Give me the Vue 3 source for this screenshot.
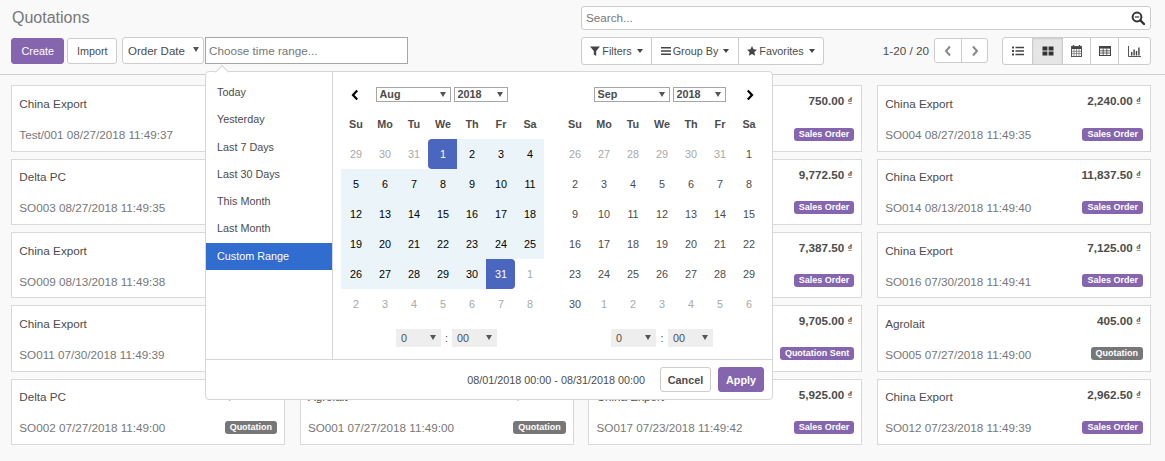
<template>
  <div class="page">
    <header class="panel">
      <h1 class="title">Quotations</h1>
      <div class="search">
        <span class="search-text">Search...</span>
        <svg class="search-icon" viewBox="0 0 14 14" width="14" height="14">
          <circle cx="6" cy="6" r="4.4" fill="none" stroke="#333" stroke-width="2" />
          <path d="M9.4 9.4 L13 13" stroke="#333" stroke-width="2.4" stroke-linecap="round" />
          <path d="M3.8 6 H8.2" stroke="#333" stroke-width="1.2" />
        </svg>
      </div>

      <div class="actions">
        <button class="btn primary">Create</button>
        <button class="btn">Import</button>
        <div class="select-wrap order-date">
          <select class="order-select"><option>Order Date</option></select>
        </div>
        <input class="range-input" placeholder="Choose time range..." />
      </div>

      <div class="tools">
        <div class="group filters">
          <button class="tool filter-btn">
            <svg viewBox="0 0 10 10" width="10" height="10"><path d="M0 .5 H10 L6.2 5 V10 L3.8 8.4 V5 Z" fill="#444" /></svg>
            Filters<i class="caret"></i>
          </button>
          <button class="tool group-btn">
            <svg viewBox="0 0 10 10" width="10" height="10"><path d="M0 1 H10 V2.6 H0 Z M0 4.2 H10 V5.8 H0 Z M0 7.4 H10 V9 H0 Z" fill="#444" /></svg>
            Group By<i class="caret"></i>
          </button>
          <button class="tool fav-btn">
            <svg viewBox="0 0 10 10" width="10" height="10"><path d="M5 0 L6.5 3.3 L10 3.7 L7.4 6.1 L8.1 9.7 L5 7.9 L1.9 9.7 L2.6 6.1 L0 3.7 L3.5 3.3 Z" fill="#444" /></svg>
            Favorites<i class="caret"></i>
          </button>
        </div>

        <div class="pager">
          <span class="pager-text">1-20 / 20</span>
          <div class="group pager-btns">
            <button class="tool">
              <svg viewBox="0 0 8 12" width="8" height="12"><path d="M6 1.5 L2 6 L6 10.5" fill="none" stroke="#888" stroke-width="2" /></svg>
            </button>
            <button class="tool">
              <svg viewBox="0 0 8 12" width="8" height="12"><path d="M2 1.5 L6 6 L2 10.5" fill="none" stroke="#888" stroke-width="2" /></svg>
            </button>
          </div>
        </div>

        <div class="group views">
          <button class="tool view">
            <svg viewBox="0 0 12 10" width="12" height="10"><path d="M0 .5 H2 V2.5 H0 Z M3.5 .8 H12 V2.2 H3.5 Z M0 4 H2 V6 H0 Z M3.5 4.3 H12 V5.7 H3.5 Z M0 7.5 H2 V9.5 H0 Z M3.5 7.8 H12 V9.2 H3.5 Z" fill="#444" /></svg>
          </button>
          <button class="tool view active">
            <svg viewBox="0 0 12 10" width="12" height="10"><path d="M.5 .5 H5.4 V4.4 H.5 Z M6.6 .5 H11.5 V4.4 H6.6 Z M.5 5.6 H5.4 V9.5 H.5 Z M6.6 5.6 H11.5 V9.5 H6.6 Z" fill="#333" /></svg>
          </button>
          <button class="tool view">
            <svg viewBox="0 0 11 12" width="11" height="12">
              <path d="M2.5 0 V2 M8.5 0 V2" stroke="#444" stroke-width="1.4" />
              <rect x=".5" y="1.5" width="10" height="10" fill="none" stroke="#555" />
              <rect x="1" y="2" width="9" height="2" fill="#444" />
              <path d="M3 4 V11 M5.5 4 V11 M8 4 V11 M1 6.3 H10 M1 8.6 H10" stroke="#777" stroke-width=".8" />
            </svg>
          </button>
          <button class="tool view">
            <svg viewBox="0 0 12 10" width="12" height="10">
              <rect x=".5" y=".5" width="11" height="9" fill="none" stroke="#444" />
              <rect x="1" y="1" width="10" height="1.6" fill="#444" />
              <path d="M4.2 2.6 V9 M7.8 2.6 V9 M1 4.8 H11 M1 7 H11" stroke="#444" stroke-width=".8" />
            </svg>
          </button>
          <button class="tool view">
            <svg viewBox="0 0 13 11" width="13" height="11">
              <path d="M.5 0 V10.5 H13" fill="none" stroke="#555" />
              <path d="M3 6 H4.4 V9.5 H3 Z M5.4 3.5 H6.8 V9.5 H5.4 Z M7.8 5 H9.2 V9.5 H7.8 Z M10.2 1.5 H11.6 V9.5 H10.2 Z" fill="#444" />
            </svg>
          </button>
        </div>
      </div>
    </header>

    <main class="board">
      <article v-for="(card, i) in cards" :key="i" class="card">
        <div class="card-top">
          <span class="card-name">{{ card.name }}</span>
          <strong v-if="card.amount" class="card-amount">{{ card.amount }} <span class="currency">₫</span></strong>
        </div>
        <div class="card-bottom">
          <span class="card-ref">{{ card.ref }}</span>
          <span v-if="card.state" class="badge" :class="{ grey: card.state === 'Quotation' }">{{ card.state }}</span>
        </div>
      </article>
    </main>

    <section class="picker">
      <span class="picker-arrow"></span>
      <div class="picker-main">
        <ul class="ranges">
          <li v-for="r in ranges" :key="r" :class="{ current: r === 'Custom Range' }">{{ r }}</li>
        </ul>
        <div class="calendars">
          <div v-for="cal in calendars" :key="cal.month" class="calendar" :class="cal.side">
            <div class="cal-head">
              <span class="chev">
                <svg v-if="cal.side === 'left'" viewBox="0 0 8 12" width="8" height="12"><path d="M6.2 1.5 L2 6 L6.2 10.5" fill="none" stroke="#000" stroke-width="2.2" /></svg>
              </span>
              <div class="cal-selects">
                <div class="select-wrap" :style="{ width: cal.monthWidth + 'px' }">
                  <select class="cal-select"><option>{{ cal.month }}</option></select>
                </div>
                <div class="select-wrap" :style="{ width: cal.yearWidth + 'px' }">
                  <select class="cal-select"><option>2018</option></select>
                </div>
              </div>
              <span class="chev">
                <svg v-if="cal.side === 'right'" viewBox="0 0 8 12" width="8" height="12"><path d="M1.8 1.5 L6 6 L1.8 10.5" fill="none" stroke="#000" stroke-width="2.2" /></svg>
              </span>
            </div>
            <div class="cal-grid">
              <span v-for="d in weekdays" :key="d" class="dow">{{ d }}</span>
              <span v-for="(day, n) in cal.days" :key="n" class="day" :class="day.cls">{{ day.label }}</span>
            </div>
            <div class="time-row">
              <div class="select-wrap time"><select class="time-select"><option>0</option></select></div>
              <span class="colon">:</span>
              <div class="select-wrap time"><select class="time-select"><option>00</option></select></div>
            </div>
          </div>
        </div>
      </div>
      <footer class="picker-foot">
        <span class="picked">08/01/2018 00:00 - 08/31/2018 00:00</span>
        <button class="foot-btn">Cancel</button>
        <button class="foot-btn apply">Apply</button>
      </footer>
    </section>
  </div>
</template>

<script setup>
const ranges = ['Today', 'Yesterday', 'Last 7 Days', 'Last 30 Days', 'This Month', 'Last Month', 'Custom Range']
const weekdays = ['Su', 'Mo', 'Tu', 'We', 'Th', 'Fr', 'Sa']

function blank() {
  return { name: '', ref: '', amount: '', state: '' }
}

const cards = [
  { name: 'China Export', ref: 'Test/001 08/27/2018 11:49:37', amount: '', state: '' },
  blank(),
  { name: '', ref: '', amount: '750.00', state: 'Sales Order' },
  { name: 'China Export', ref: 'SO004 08/27/2018 11:49:35', amount: '2,240.00', state: 'Sales Order' },
  { name: 'Delta PC', ref: 'SO003 08/27/2018 11:49:35', amount: '', state: '' },
  blank(),
  { name: '', ref: '', amount: '9,772.50', state: 'Sales Order' },
  { name: 'China Export', ref: 'SO014 08/13/2018 11:49:40', amount: '11,837.50', state: 'Sales Order' },
  { name: 'China Export', ref: 'SO009 08/13/2018 11:49:38', amount: '', state: '' },
  blank(),
  { name: '', ref: '', amount: '7,387.50', state: 'Sales Order' },
  { name: 'China Export', ref: 'SO016 07/30/2018 11:49:41', amount: '7,125.00', state: 'Sales Order' },
  { name: 'China Export', ref: 'SO011 07/30/2018 11:49:39', amount: '', state: '' },
  blank(),
  { name: '', ref: '', amount: '9,705.00', state: 'Quotation Sent' },
  { name: 'Agrolait', ref: 'SO005 07/27/2018 11:49:00', amount: '405.00', state: 'Quotation' },
  { name: 'Delta PC', ref: 'SO002 07/27/2018 11:49:00', amount: '1,799.00', state: 'Quotation' },
  { name: 'Agrolait', ref: 'SO001 07/27/2018 11:49:00', amount: '1,799.00', state: 'Quotation' },
  { name: 'China Export', ref: 'SO017 07/23/2018 11:49:42', amount: '5,925.00', state: 'Sales Order' },
  { name: 'China Export', ref: 'SO012 07/23/2018 11:49:39', amount: '2,962.50', state: 'Sales Order' },
]

// 42 cells starting from the Sunday before the 1st
function buildDays(prevLast, prevCount, monthLen, inRange) {
  const days = []
  for (let i = prevCount - 1; i >= 0; i--) days.push({ label: prevLast - i, cls: 'off' })
  for (let d = 1; d <= monthLen; d++) {
    let cls = ''
    if (inRange) {
      cls = d === 1 ? 'start' : d === monthLen ? 'end' : 'in-range'
    }
    days.push({ label: d, cls })
  }
  let next = 1
  while (days.length < 42) days.push({ label: next++, cls: 'off' })
  return days
}

const calendars = [
  { side: 'left', month: 'Aug', monthWidth: 75, yearWidth: 54, days: buildDays(31, 3, 31, true) },
  { side: 'right', month: 'Sep', monthWidth: 76, yearWidth: 53, days: buildDays(31, 6, 30, false) },
]
</script>

<style scoped>
.page {
  position: relative;
  height: 461px;
  overflow: hidden;
  background: #f9f9f9;
  font-family: "Liberation Sans", Arial, sans-serif;
  font-size: 11.7px;
  color: #4c4c4c;
}

/* control panel */
.panel {
  display: grid;
  grid-template-columns: 570px 1fr;
  grid-template-rows: 24px 27px;
  row-gap: 7px;
  box-sizing: border-box;
  height: 75px;
  padding: 6px 14px 10px 11px;
  border-bottom: 1px solid #cfcfcf;
}

.title {
  margin: 0 0 0 1px;
  font-size: 16px;
  font-weight: 400;
  line-height: 24px;
  color: #777;
}

.search {
  display: flex;
  align-items: center;
  justify-content: space-between;
  padding: 0 5px 0 4px;
  background: #fff;
  border: 1px solid #ccc;
  border-radius: 3px;
}

.search-text {
  margin-bottom: 2px;
  color: #777;
}

.actions {
  display: flex;
  align-items: center;
}

.btn {
  height: 26px;
  margin-top: 1px;
  margin-right: 3px;
  padding: 0 8.5px;
  background: #fff;
  border: 1px solid #ccc;
  border-radius: 3px;
  font-family: inherit;
  font-size: 10.8px;
  color: #4c4c4c;
}

.btn.primary {
  padding: 0 9.5px;
  background: #8465ae;
  border-color: #8465ae;
  color: #fff;
}

.select-wrap {
  position: relative;
  display: block;
}

.select-wrap::after {
  content: "";
  position: absolute;
  top: 50%;
  right: 5px;
  margin-top: -3px;
  border-left: 3px solid transparent;
  border-right: 3px solid transparent;
  border-top: 5.5px solid #555;
  pointer-events: none;
}

.select-wrap select {
  appearance: none;
  display: block;
  width: 100%;
  height: 100%;
  margin: 0;
  outline: none;
  font-family: inherit;
}

.order-date {
  width: 82px;
  height: 27px;
  margin-left: 2px;
}

.order-date::after {
  margin-top: -4px;
}

.order-select {
  padding: 0 0 0 5px;
  background: #fff;
  border: 1px solid #ccc;
  border-radius: 3px;
  font-size: 11.5px;
  color: #4c4c4c;
}

.range-input {
  width: 203px;
  height: 27px;
  box-sizing: border-box;
  margin-left: 1px;
  padding: 0 3px;
  background: #fff;
  border: 1px solid #a6a6a6;
  outline: none;
  font: inherit;
}

.range-input::placeholder {
  color: #777;
}

.tools {
  display: flex;
  align-items: stretch;
}

.group {
  display: flex;
  background: #fff;
  border: 1px solid #ccc;
  border-radius: 3px;
}

.tool {
  display: flex;
  align-items: center;
  justify-content: center;
  gap: 2px;
  padding: 0;
  background: transparent;
  border: none;
  border-left: 1px solid #ccc;
  font-family: inherit;
  font-size: 10.8px;
  color: #4c4c4c;
}

.tool:first-child {
  border-left: none;
}

.filters {
  height: 26px;
}

.filter-btn {
  width: 69px;
}

.group-btn {
  width: 87px;
}

.fav-btn {
  width: 85px;
}

.caret {
  width: 0;
  height: 0;
  margin-left: 3px;
  border-left: 3.5px solid transparent;
  border-right: 3.5px solid transparent;
  border-top: 4px solid #444;
}

.pager {
  display: flex;
  align-items: center;
  gap: 5px;
  margin-left: auto;
  height: 26px;
}

.pager-btns {
  height: 25px;
  margin-top: 1px;
  box-sizing: border-box;
}

.pager-btns .tool {
  width: 26px;
}

.views {
  height: 26px;
  margin-left: 14px;
}

.view {
  height: 100%;
  width: 28px;
}

.view:nth-child(1) {
  width: 29px;
}

.view:nth-child(2) {
  width: 30px;
}

.view:nth-child(5) {
  width: 32px;
}

.view.active {
  background: #e6e6e6;
  box-shadow: inset 0 1px 2px rgba(0, 0, 0, 0.12);
}

/* kanban cards */
.board {
  display: grid;
  grid-template-columns: repeat(4, 1fr);
  grid-template-rows: 66.6px 66.4px 66.4px 66.2px 66.4px;
  gap: 7px 14.5px;
  padding: 10px 14px 0 11px;
}

.card {
  display: flex;
  flex-direction: column;
  justify-content: space-between;
  box-sizing: border-box;
  padding: 8px 7px 8.6px 7.3px;
  background: #fff;
  border: 1px solid #d9d9d9;
}

.card-top,
.card-bottom {
  display: flex;
  justify-content: space-between;
}

.card-top {
  align-items: flex-start;
  min-height: 20px;
}

.card-bottom {
  align-items: center;
  min-height: 15px;
}

.card-name {
  margin-top: 2.8px;
}

.card-amount {
  margin-right: 2px;
  color: #4c4c4c;
}

.currency {
  position: relative;
  top: -1px;
  font-size: 9.5px;
  font-weight: 700;
}

.card-ref {
  color: #777;
}

.badge {
  margin-bottom: 1px;
  padding: 1px 5px 2px;
  background: #8465ae;
  border-radius: 3px;
  font-size: 9px;
  font-weight: 700;
  line-height: 10px;
  color: #fff;
}

.badge.grey {
  background: #777;
}

/* date range picker */
.picker {
  position: absolute;
  top: 71px;
  left: 205px;
  width: 568px;
  height: 329px;
  box-sizing: border-box;
  display: flex;
  flex-direction: column;
  background: #fff;
  border: 1px solid #d6d6d6;
  border-radius: 4px;
  font-size: 10.8px;
}

.picker-arrow {
  position: absolute;
  top: -5px;
  left: 10.5px;
  width: 9px;
  height: 9px;
  background: #fff;
  border-top: 1px solid #d6d6d6;
  border-left: 1px solid #d6d6d6;
  transform: rotate(45deg);
}

.picker-main {
  flex: 1;
  display: flex;
  min-height: 0;
}

.ranges {
  width: 126px;
  margin: 0;
  padding: 7px 0 0;
  list-style: none;
  border-right: 1px solid #d6d6d6;
}

.ranges li {
  height: 27.3px;
  padding-left: 11px;
  line-height: 27px;
  color: #4c4c4c;
}

.ranges li.current {
  background: #316ccf;
  color: #fff;
}

.calendars {
  display: flex;
  gap: 16px;
  padding: 7px 0 0 8px;
}

.calendar {
  width: 203px;
}

.cal-head {
  display: flex;
  align-items: center;
  justify-content: space-between;
  height: 30px;
  padding-top: 1px;
  box-sizing: border-box;
}

.chev {
  display: flex;
  box-sizing: border-box;
  width: 29px;
}

.left .chev {
  padding-left: 10px;
}

.right .chev {
  justify-content: flex-end;
  padding-right: 9.5px;
}

.cal-selects {
  display: flex;
  gap: 3px;
}

.left .cal-selects {
  margin-right: 2px;
}

.right .cal-selects {
  margin-right: 4px;
}

.cal-selects .select-wrap {
  height: 15px;
}

.cal-select {
  padding: 0 0 0 3px;
  background: #fff;
  border: 1px solid #a6a6a6;
  border-radius: 0;
  font-size: 10.8px;
  font-weight: 700;
  line-height: 13px;
  color: #4c4c4c;
}

.cal-grid {
  display: grid;
  grid-template-columns: repeat(7, 29px);
  grid-auto-rows: 30px;
  align-items: stretch;
}

.dow,
.day {
  display: flex;
  align-items: center;
  justify-content: center;
  padding-left: 1px;
}

.dow {
  font-weight: 700;
}

.day.off {
  color: #a8a8a8;
}

.day.in-range {
  background: #ebf4f8;
  color: #000;
}

.day.start,
.day.end {
  background: #4a66bf;
  color: #fff;
}

.day.start {
  border-radius: 4px 0 0 4px;
}

.day.end {
  border-radius: 0 4px 4px 0;
}

.time-row {
  display: flex;
  align-items: center;
  justify-content: center;
  gap: 3px;
  margin-top: 10px;
}

.left .time-row {
  padding-left: 8px;
}

.right .time-row {
  gap: 3.5px;
  padding-left: 1px;
}

.select-wrap.time {
  width: 45px;
  height: 18px;
}

.time-select {
  padding: 0 0 0 5px;
  background: #eee;
  border: none;
  border-radius: 0;
  font-size: 10.8px;
  color: #4c4c4c;
}

.colon {
  width: 5px;
  text-align: center;
}

.picker-foot {
  display: flex;
  align-items: center;
  justify-content: flex-end;
  gap: 7px;
  height: 40px;
  box-sizing: border-box;
  padding: 0 8px 0 0;
  border-top: 1px solid #d6d6d6;
}

.picked {
  margin-right: 8px;
}

.foot-btn {
  height: 25px;
  width: 51px;
  padding: 0;
  background: #fff;
  border: 1px solid #ccc;
  border-radius: 3px;
  font-family: inherit;
  font-size: 10.8px;
  font-weight: 700;
  color: #4c4c4c;
}

.foot-btn.apply {
  width: 46px;
  background: #8465ae;
  border-color: #8465ae;
  color: #fff;
}
</style>

<style>
html,
body {
  margin: 0;
  background: #f9f9f9;
}
</style>
